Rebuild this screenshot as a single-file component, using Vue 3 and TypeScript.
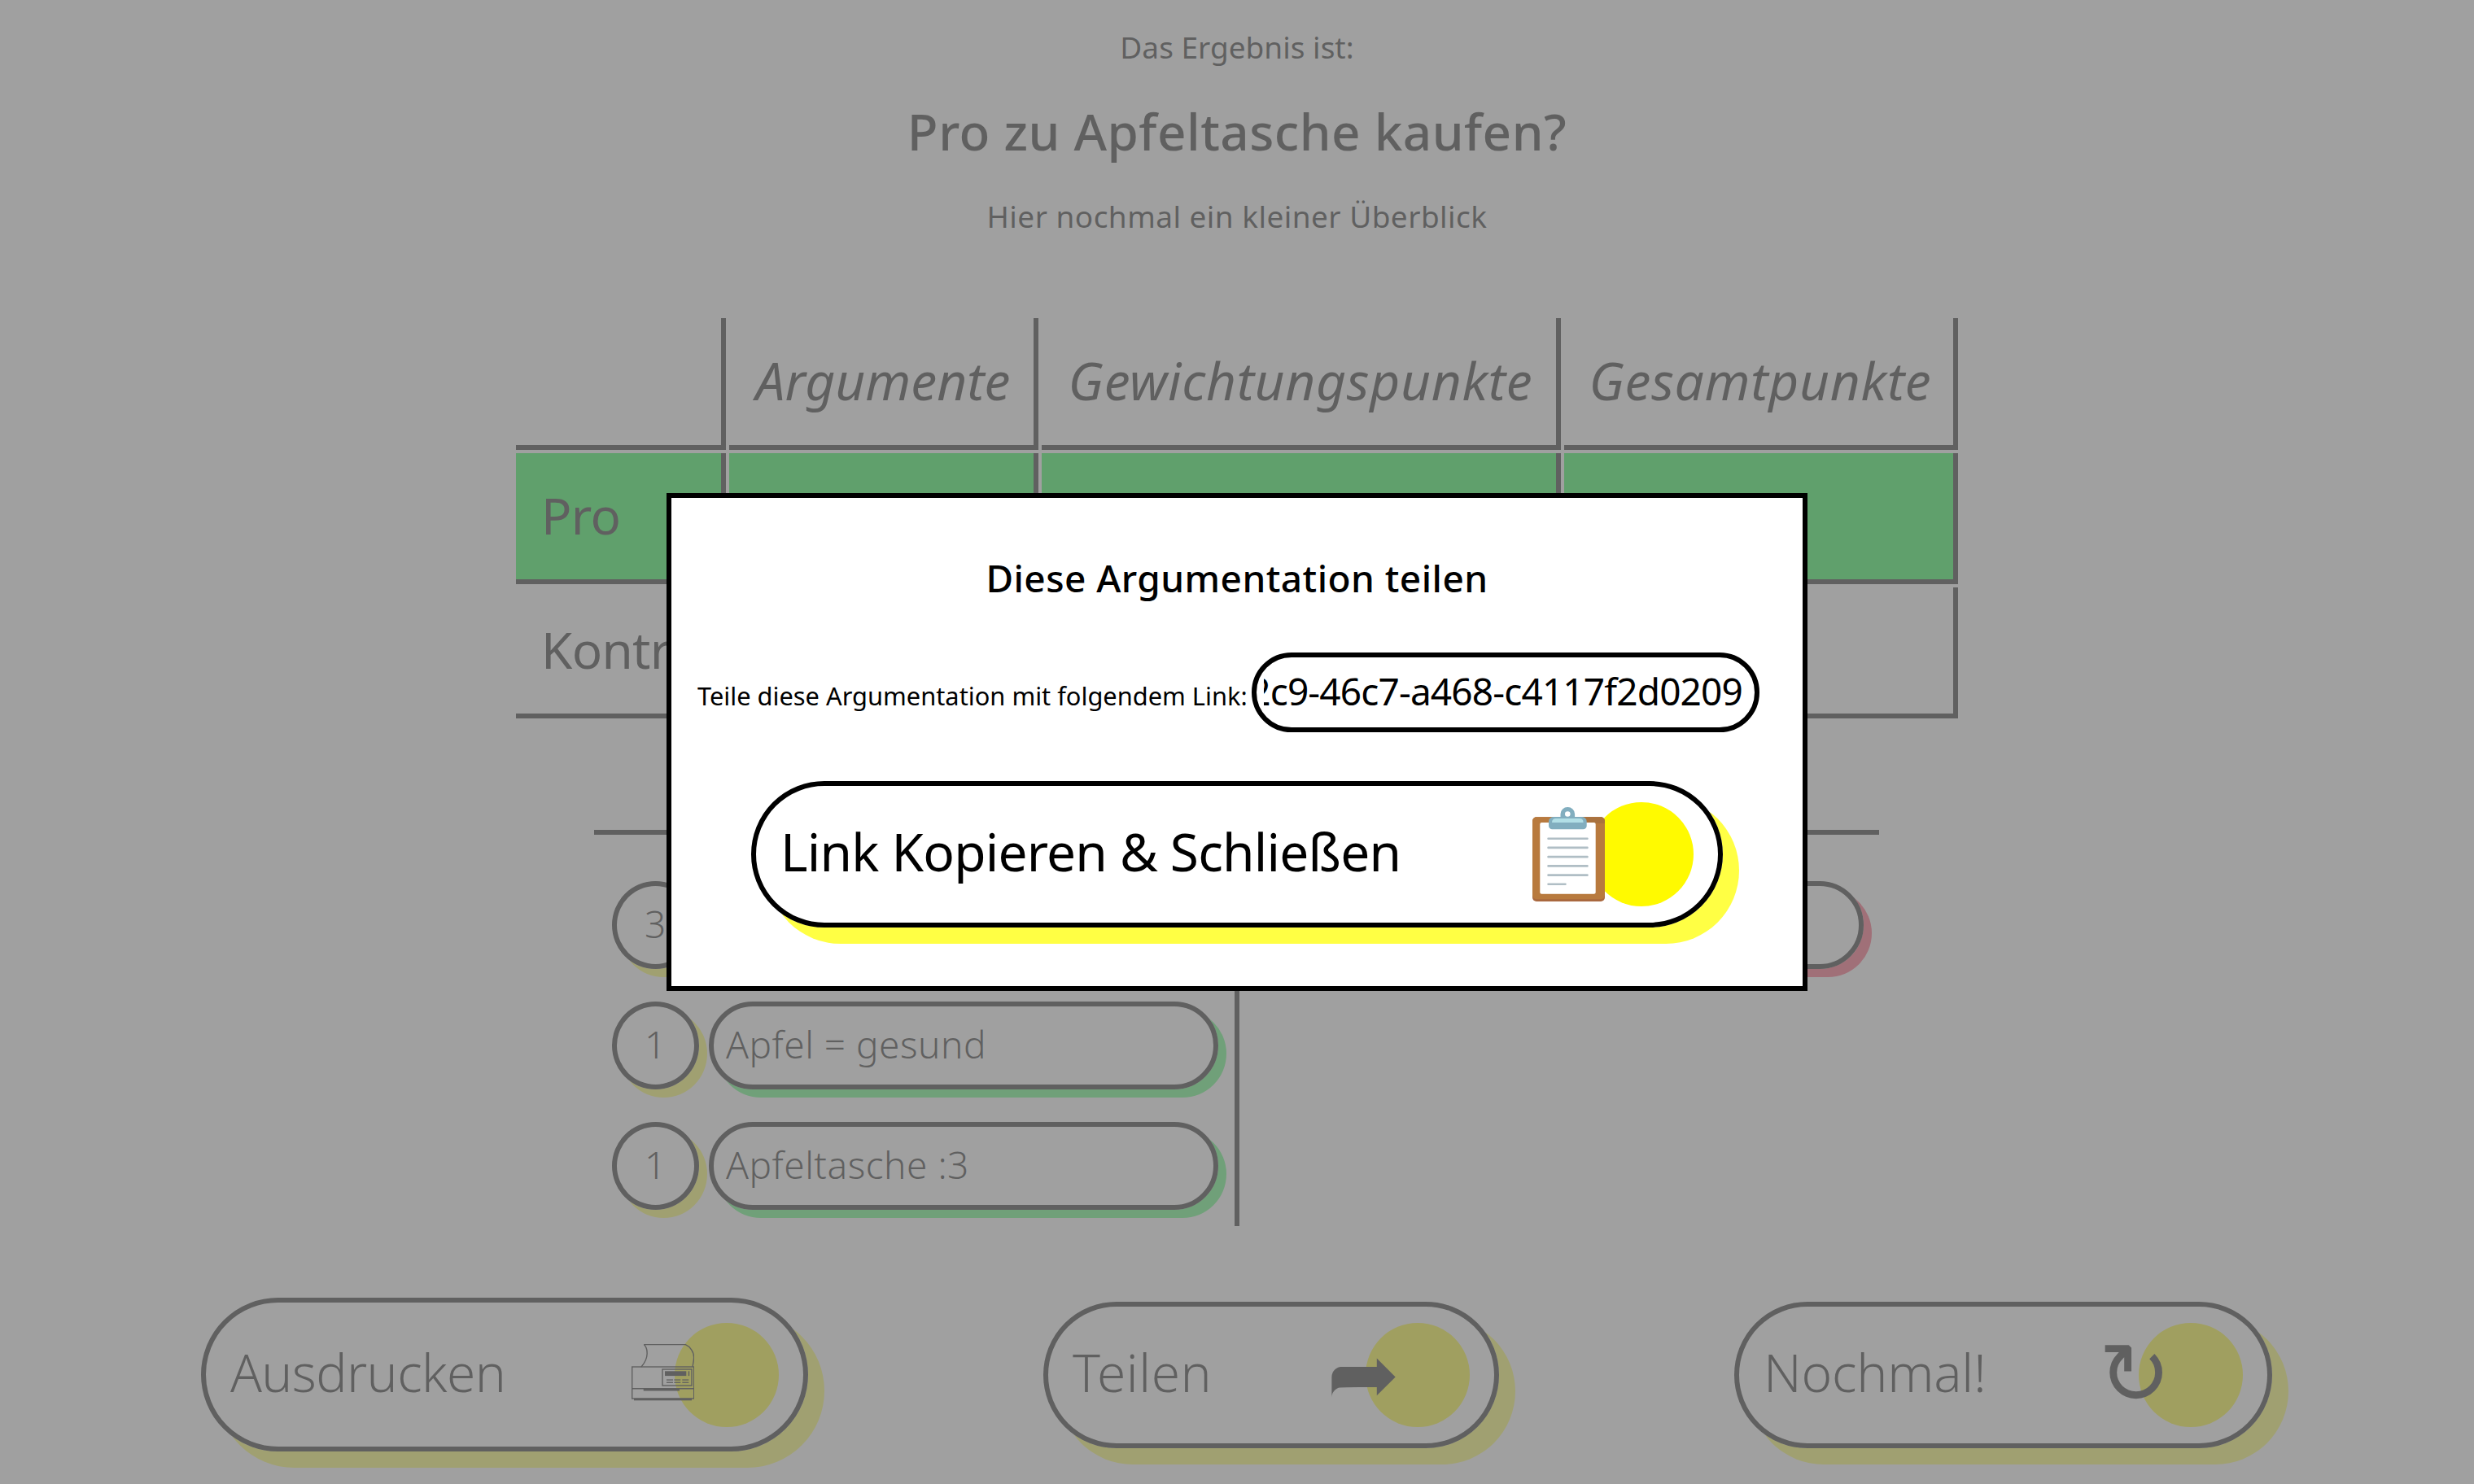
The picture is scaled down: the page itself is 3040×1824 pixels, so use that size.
<script setup lang="ts">
interface Row { label: string; cls: string }
const rows: Row[] = [
  { label: 'Pro', cls: 'pro' },
  { label: 'Kontra', cls: 'kontra' },
]
const heads: string[] = ['Argumente', 'Gewichtungspunkte', 'Gesamtpunkte']
const pros: { n: number; t: string }[] = [
  { n: 3, t: '' },
  { n: 1, t: 'Apfel = gesund' },
  { n: 1, t: 'Apfeltasche :3' },
]
</script>

<template>
  <div class="page">
    <p class="lead first">Das Ergebnis ist:</p>
    <h1 class="title">Pro zu Apfeltasche kaufen?</h1>
    <p class="lead second">Hier nochmal ein kleiner Überblick</p>

    <table class="score">
      <colgroup>
        <col class="c1" /><col class="c2" /><col class="c3" /><col class="c4" />
      </colgroup>
      <thead>
        <tr>
          <th></th>
          <th v-for="h in heads" :key="h">{{ h }}</th>
        </tr>
      </thead>
      <tbody>
        <tr v-for="r in rows" :key="r.label" :class="r.cls">
          <td class="rowlabel">{{ r.label }}</td>
          <td></td><td></td><td></td>
        </tr>
      </tbody>
    </table>

    <section class="args">
      <div class="col left">
        <div v-for="(a, i) in pros" :key="i" class="arg">
          <span class="num">{{ a.n }}</span>
          <span class="pill green">{{ a.t }}</span>
        </div>
      </div>
      <div class="col right">
        <div class="arg">
          <span class="num">1</span>
          <span class="pill red"></span>
        </div>
      </div>
    </section>

    <div class="actions">
      <button class="btn big w-print">
        <span class="btn-text">Ausdrucken</span>
        <svg class="icon printer" viewBox="0 0 77 70" width="77" height="70" fill="none" stroke="#000" stroke-width="1.4">
          <path d="M15.3.6H66.3C72 3 77 10 76.6 17C76.4 21 75.6 24 75 28" />
          <path d="M15.3.6C20 5 22 17 12 28" />
          <rect x=".7" y="28" width="76" height="39" />
          <path d="M.7 54.7H76.7" />
          <rect x="38" y="31" width="36" height="20" />
          <g fill="#000" stroke="none">
            <rect x="14.7" y="54.7" width="44.3" height="2.8" />
            <rect x="3" y="66.7" width="71" height="2.6" />
            <rect x="41" y="33.3" width="26.3" height="5.8" />
            <rect x="69.7" y="33.3" width="1.5" height="5.8" />
            <rect x="43" y="43.4" width="8" height="1.3" /><rect x="52.3" y="43.4" width="8" height="1.3" /><rect x="62.3" y="43.4" width="8" height="1.3" />
            <rect x="43" y="46.6" width="8" height="1.3" /><rect x="52.3" y="46.6" width="8" height="1.3" /><rect x="62.3" y="46.6" width="8" height="1.3" />
          </g>
        </svg>
        <span class="dot o-print"></span>
      </button>
      <button class="btn w-share">
        <span class="btn-text">Teilen</span>
        <span class="glyph arrow">➦</span>
        <span class="dot o-share"></span>
      </button>
      <button class="btn w-again">
        <span class="btn-text">Nochmal!</span>
        <span class="glyph reload">↻</span>
        <span class="dot o-again"></span>
      </button>
    </div>

    <div class="overlay">
      <div class="modal">
        <h2 class="modal-title">Diese Argumentation teilen</h2>
        <div class="link-row">
          <label class="link-label">Teile diese Argumentation mit folgendem Link:</label>
          <div class="link-box">
            <div class="link-clip"><span class="link-value">2c9-46c7-a468-c4117f2d0209</span></div>
          </div>
        </div>
        <button class="btn copy">
          <span class="btn-text">Link Kopieren &amp; Schließen</span>
          <svg class="icon clip" viewBox="0 0 89 116" width="89" height="116">
            <rect x="0" y="12.3" width="89" height="103.7" rx="5" fill="#a9683f" />
            <rect x="0" y="12.3" width="89" height="101" rx="5" fill="#b87a3e" />
            <path d="M60 12.3H84a5 5 0 0 1 5 5V20H60Z" fill="#a9723f" />
            <rect x="9.3" y="19" width="68.4" height="87.7" rx="2" fill="#fff" />
            <g fill="#b0bec5">
              <rect x="18.3" y="37.4" width="50.4" height="2.7" rx="1" />
              <rect x="18.3" y="48.6" width="50.4" height="2.7" rx="1" />
              <rect x="18.3" y="59.8" width="50.4" height="2.7" rx="1" />
              <rect x="18.3" y="71" width="50.4" height="2.7" rx="1" />
              <rect x="18.3" y="82.2" width="50.4" height="2.7" rx="1" />
              <rect x="18.3" y="93.4" width="23.4" height="2.7" rx="1" />
            </g>
            <path d="M34.5 12V8.5a8.8 8.5 0 0 1 17.6 0V12h9a5.6 5.6 0 0 1 5.6 5.6v5.4a4.3 4.3 0 0 1-4.3 4.3H24.3A4.3 4.3 0 0 1 20 23v-5.4A5.6 5.6 0 0 1 25.6 12Z" fill="#82aebf" />
            <path d="M24 19c0-3.4 2-5 4.6-5H58c3 0 4.6 1.6 4.6 5Z" fill="#b2dfe6" />
            <circle cx="43.3" cy="8.5" r="3.3" fill="#fff" />
          </svg>
          <span class="dot o-clip"></span>
        </button>
      </div>
    </div>
  </div>
</template>

<style scoped>
.page {
  position: relative;
  width: 3040px;
  height: 1824px;
  overflow: hidden;
  background: #fff;
  color: #000;
  font-family: "Noto Sans", "Open Sans", sans-serif;
}
.lead {
  margin: 0;
  text-align: center;
  font-size: 37px;
  line-height: 50px;
}
.first { padding-top: 33px; }
.second { margin-top: 40px; letter-spacing: 0.45px; }
.title {
  margin: 38px 0 0;
  text-align: center;
  font-size: 62px;
  line-height: 80px;
  font-weight: 500;
  letter-spacing: 0.45px;
}
.score {
  margin: 96px auto 0;
  width: 1780px;
  table-layout: fixed;
  border-collapse: separate;
  border-spacing: 4px;
}
.c1 { width: 258px; }
.c2 { width: 380px; }
.c3 { width: 638px; }
.c4 { width: 484px; }
.score th,
.score td {
  box-sizing: border-box;
  height: 161px;
  padding: 0;
  border-right: 6px solid #000;
  border-bottom: 6px solid #000;
}
.score th {
  height: 162px;
  padding: 0 0 4px 4px;
  font-size: 64px;
  font-style: italic;
  font-weight: 400;
  text-align: center;
  letter-spacing: 0.7px;
}
.score th:nth-child(2) { letter-spacing: 0; }
.score .rowlabel {
  padding: 0 0 4px 31px;
  font-size: 62px;
  letter-spacing: -0.7px;
}
.pro td { background: #00ff30; }
.args {
  margin: 133px 0 0 730px;
  width: 1579px;
  display: grid;
  grid-template-columns: 793px 786px;
  border-top: 6px solid #000;
  box-sizing: border-box;
}
.col {
  box-sizing: border-box;
  padding: 57px 0 20px 22px;
  display: flex;
  flex-direction: column;
  gap: 40px;
}
.left { border-right: 6px solid #000; }
.arg {
  display: flex;
  gap: 12px;
  font-size: 46px;
  font-weight: 350;
  letter-spacing: 0.5px;
}
.num,
.pill {
  box-sizing: border-box;
  height: 108px;
  border: 6px solid #000;
  display: flex;
  align-items: center;
  line-height: 1;
  padding-bottom: 4px;
}
.num {
  width: 107px;
  border-radius: 50%;
  justify-content: center;
  box-shadow: 10px 10px 0 #ffff44;
}
.pill {
  width: 626px;
  border-radius: 54px;
  padding-left: 15px;
}
.green { box-shadow: 10px 10px 0 #40ff64; }
.red { box-shadow: 10px 10px 0 #ff4060; }
.actions {
  margin-top: 88px;
  padding-left: 247px;
  display: flex;
  align-items: center;
  gap: 289px;
}
.btn {
  box-sizing: border-box;
  height: 180px;
  padding: 0 30px 0 30px;
  display: flex;
  align-items: center;
  background: transparent;
  border: 6px solid #000;
  border-radius: 90px;
  box-shadow: 20px 20px 0 #ffff44;
  font: inherit;
  color: #000;
  font-size: 64px;
  font-weight: 350;
}
.big { height: 189px; border-radius: 95px; }
.w-print { width: 746px; }
.w-share { width: 560px; }
.w-again { width: 661px; }
.btn-text {
  padding-bottom: 6px;
  white-space: nowrap;
}
.w-print .btn-text { letter-spacing: -0.6px; }
.w-share .btn-text { letter-spacing: 0.5px; }
.w-again .btn-text { letter-spacing: -0.2px; }
.icon,
.glyph {
  position: relative;
  z-index: 1;
  margin-left: auto;
  flex: none;
}
.glyph {
  font-family: "DejaVu Sans", sans-serif;
  font-size: 107px;
  line-height: 1;
  font-weight: 400;
}
.dot {
  flex: none;
  width: 128px;
  height: 128px;
  border-radius: 50%;
  background: #fffa00;
}
.o-print { margin-left: -24px; }
.o-share { margin-left: -42px; }
.o-again { margin-left: -40px; }
.o-clip { margin-left: -19px; }
.printer { margin-bottom: 6px; }
.overlay {
  position: absolute;
  inset: 0;
  z-index: 2;
  display: flex;
  align-items: center;
  justify-content: center;
  background: rgba(128, 128, 128, 0.75);
}
.modal {
  box-sizing: border-box;
  width: 1402px;
  height: 612px;
  padding-top: 68px;
  background: #fff;
  border: 6px solid #000;
}
.modal-title {
  margin: 0;
  text-align: center;
  font-size: 46px;
  line-height: 60px;
  font-weight: 500;
  letter-spacing: 0.45px;
}
.link-row {
  margin: 62px 0 0 32px;
  display: flex;
  align-items: center;
  gap: 8px;
}
.link-label {
  width: 673px;
  padding-top: 8px;
  font-size: 30.8px;
  white-space: nowrap;
}
.link-box {
  box-sizing: border-box;
  width: 624px;
  height: 98px;
  padding: 0 15px 4px 9px;
  border: 6px solid #000;
  border-radius: 49px;
  display: flex;
  align-items: center;
}
.link-clip {
  flex: 1;
  min-width: 0;
  display: flex;
  justify-content: flex-end;
  overflow: hidden;
  font-size: 46px;
  letter-spacing: -0.85px;
  white-space: nowrap;
}
.link-value { flex: none; }
.copy {
  margin: 60px 0 0 98px;
  width: 1194px;
  font-weight: 400;
}
.copy .btn-text {
  padding-bottom: 8px;
  letter-spacing: -0.8px;
}
</style>
